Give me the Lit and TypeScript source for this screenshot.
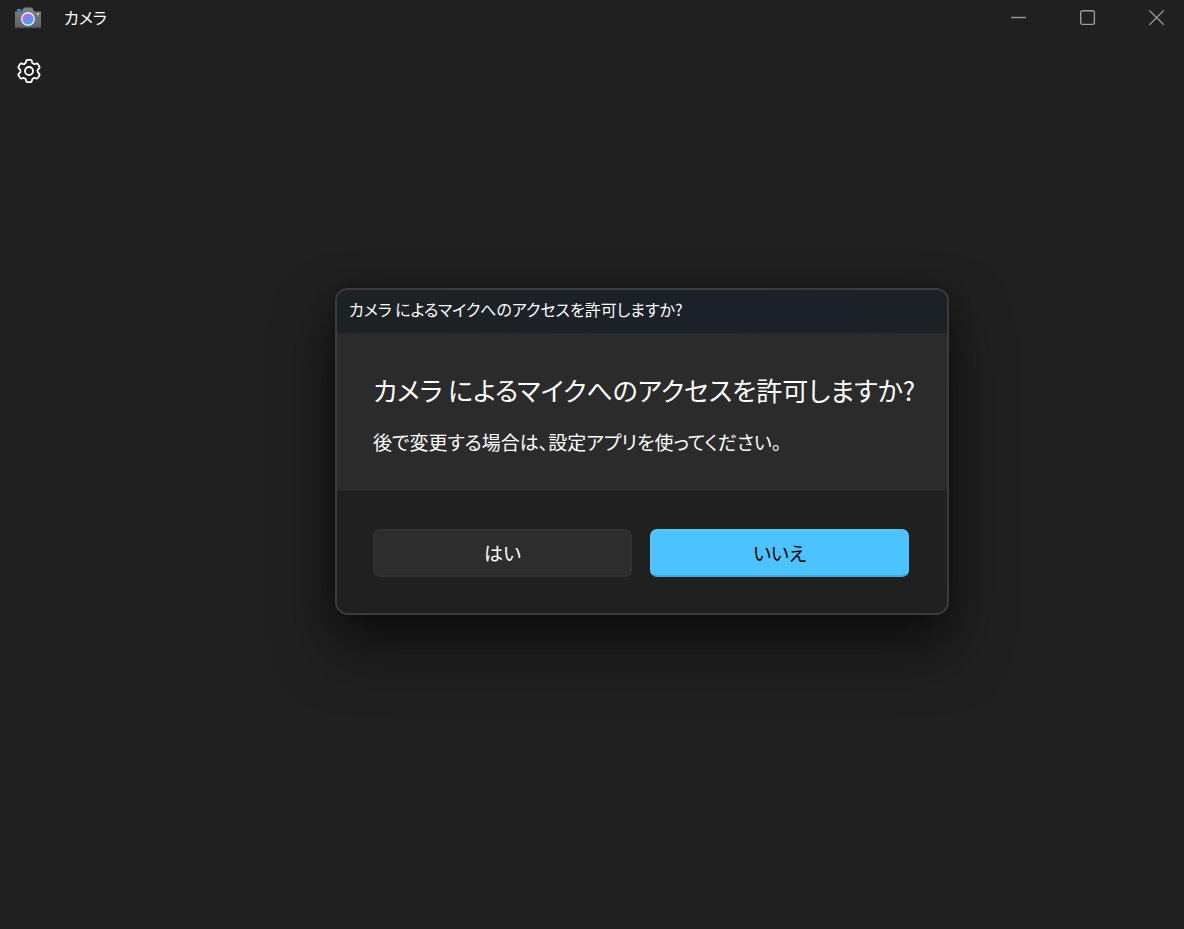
import { LitElement, html, css } from "lit";
import { customElement } from "lit/decorators.js";

/* Outline of a six-toothed gear centred on the origin. */
function gearPath(): string {
  const parts: string[] = [];
  for (let i = 0; i < 6; i++) {
    const a = (i * Math.PI) / 3;
    const p = (x: number, y: number) =>
      `${(x * Math.cos(a) - y * Math.sin(a)).toFixed(2)} ${(x * Math.sin(a) + y * Math.cos(a)).toFixed(2)}`;
    parts.push(
      `${i === 0 ? "M" : "L"}${p(-3.2, -8.4)}`,
      `L${p(-2.7, -10.4)}`,
      `Q${p(-2.4, -11.2)} ${p(-1.5, -11.2)}`,
      `L${p(1.5, -11.2)}`,
      `Q${p(2.4, -11.2)} ${p(2.7, -10.4)}`,
      `L${p(3.2, -8.4)}`,
      `Q${p(3.5, -7.5)} ${p(4.3, -7.4)}`,
    );
  }
  return parts.join("") + "Z";
}

@customElement("title-bar")
class TitleBar extends LitElement {
  static styles = css`
    :host { display: block; }
    .bar { display: flex; align-items: flex-start; height: 36px; }
    .logo { margin: 4px 0 0 14px; width: 28px; height: 28px; display: block; }
    .name {
      margin: 5px auto 0 22px;
      font-size: 16px;
      line-height: 24px;
      font-weight: 400;
    }
    .control {
      appearance: none;
      border: 0;
      padding: 0;
      margin: 0;
      background: transparent;
      color: #9b9b9b;
      width: 69px;
      height: 36px;
      display: grid;
      place-items: center;
    }
    .control:last-child { margin-right: -7px; }
    .control svg { display: block; }
  `;

  render() {
    return html`
      <header class="bar">
        <svg class="logo" viewBox="0 0 28 28" aria-hidden="true">
          <defs>
            <linearGradient id="body" x1="0" y1="0" x2="0" y2="1">
              <stop offset="0" stop-color="#7b8289" />
              <stop offset="1" stop-color="#5c6268" />
            </linearGradient>
            <linearGradient id="lens" x1="0.2" y1="0.1" x2="0.7" y2="1">
              <stop offset="0" stop-color="#b56fd9" />
              <stop offset="0.5" stop-color="#7c86ea" />
              <stop offset="1" stop-color="#22b0f0" />
            </linearGradient>
          </defs>
          <path d="M1 7.500h6.500L9.500 4.200Q9.800 3.600 10.500 3.600h7Q18.200 3.600 18.500 4.200L20.500 7.500H27v16.500H1z" fill="url(#body)" />
          <path d="M3 5h4v2.500H3z" fill="#1c9be0" />
          <path d="M1 23h26v1.200H1z" fill="#484d52" />
          <circle cx="14" cy="15" r="7" fill="#e8eaec" />
          <circle cx="14" cy="15" r="5.600" fill="url(#lens)" />
          <rect x="23" y="9" width="2" height="2" fill="#c3c9ce" />
        </svg>
        <h1 class="name">カメラ</h1>
        <button class="control" aria-label="最小化">
          <svg width="16" height="16" viewBox="0 0 16 16" fill="none" stroke="currentColor">
            <path d="M0 7.500h15" stroke-width="1.400" />
          </svg>
        </button>
        <button class="control" aria-label="最大化">
          <svg width="16" height="16" viewBox="0 0 16 16" fill="none" stroke="currentColor">
            <rect x=".7" y=".7" width="13.700" height="13.700" rx="1.800" stroke-width="1.400" />
          </svg>
        </button>
        <button class="control" aria-label="閉じる">
          <svg width="16" height="16" viewBox="0 0 16 16" fill="none" stroke="currentColor">
            <path d="M.4.4l14.400 14.400M14.800.4L.4 14.800" stroke-width="1.300" />
          </svg>
        </button>
      </header>
    `;
  }
}

@customElement("permission-dialog")
class PermissionDialog extends LitElement {
  static styles = css`
    :host { display: block; width: 100%; max-width: 614px; }
    .dialog {
      box-sizing: border-box;
      border: 2px solid #3c3c3c;
      border-radius: 13px;
      background: #202020;
      overflow: hidden;
      box-shadow: 0 32px 60px rgba(0, 0, 0, 0.54), 0 2px 21px rgba(0, 0, 0, 0.32);
    }
    .caption {
      padding: 7px 12px 12px;
      font-size: 16px;
      line-height: 24px;
      background: linear-gradient(100deg, #1d2224 0%, #1b2128 50%, #1d212a 75%, #1c2126 100%);
    }
    .body { padding: 36px 24px 34px 36px; background: #2b2b2b; }
    .heading { margin: 0; font-size: 26px; line-height: 42px; font-weight: 400; }
    .note { margin: 16px 0 0; font-size: 19px; line-height: 30px; }
    .actions {
      display: grid;
      grid-template-columns: 1fr 1fr;
      gap: 18px;
      padding: 36px 38px 36px 36px;
      border-top: 2px solid #1d1d1d;
    }
    .button {
      appearance: none;
      box-sizing: border-box;
      height: 48px;
      margin: 0;
      padding: 0;
      border: 2px solid #323232;
      border-radius: 7px;
      background: #2d2d2d;
      color: #fff;
      font: inherit;
      font-feature-settings: inherit;
      font-size: 19px;
      line-height: 30px;
    }
    .primary {
      background: #4cc2ff;
      border-color: #56c5ff #56c5ff #42a7dc;
      color: #000;
    }
  `;

  render() {
    return html`
      <section class="dialog" role="dialog" aria-labelledby="heading" aria-describedby="note">
        <div class="caption">カメラ によるマイクへのアクセスを許可しますか?</div>
        <div class="body">
          <h2 class="heading" id="heading">カメラ によるマイクへのアクセスを許可しますか?</h2>
          <p class="note" id="note">後で変更する場合は、設定アプリを使ってください。</p>
        </div>
        <div class="actions">
          <button class="button">はい</button>
          <button class="button primary">いいえ</button>
        </div>
      </section>
    `;
  }
}

@customElement("app-root")
class AppRoot extends LitElement {
  static styles = css`
    :host {
      display: flex;
      flex-direction: column;
      position: relative;
      box-sizing: border-box;
      min-height: 100vh;
      overflow: hidden;
      background: #202020;
      color: #fff;
      font-family: "Noto Sans CJK JP", "Noto Sans", sans-serif;
      font-feature-settings: "palt";
    }
    .toolbar { display: flex; padding: 15px 9px; }
    .settings {
      appearance: none;
      border: 0;
      padding: 0;
      margin: 0;
      width: 40px;
      height: 40px;
      background: transparent;
      color: #fff;
      display: grid;
      place-items: center;
    }
    .layer {
      position: absolute;
      inset: 0;
      display: grid;
      place-items: center;
      padding: 0 0 26px 100px;
      pointer-events: none;
    }
    .layer > * { pointer-events: auto; }
  `;

  render() {
    return html`
      <title-bar></title-bar>
      <nav class="toolbar">
        <button class="settings" aria-label="設定">
          <svg width="26" height="26" viewBox="-13 -13 26 26" fill="none" stroke="currentColor" stroke-width="1.800" stroke-linejoin="round" aria-hidden="true">
            <path d=${gearPath()} />
            <circle r="4" />
          </svg>
        </button>
      </nav>
      <div class="layer"><permission-dialog></permission-dialog></div>
    `;
  }
}
